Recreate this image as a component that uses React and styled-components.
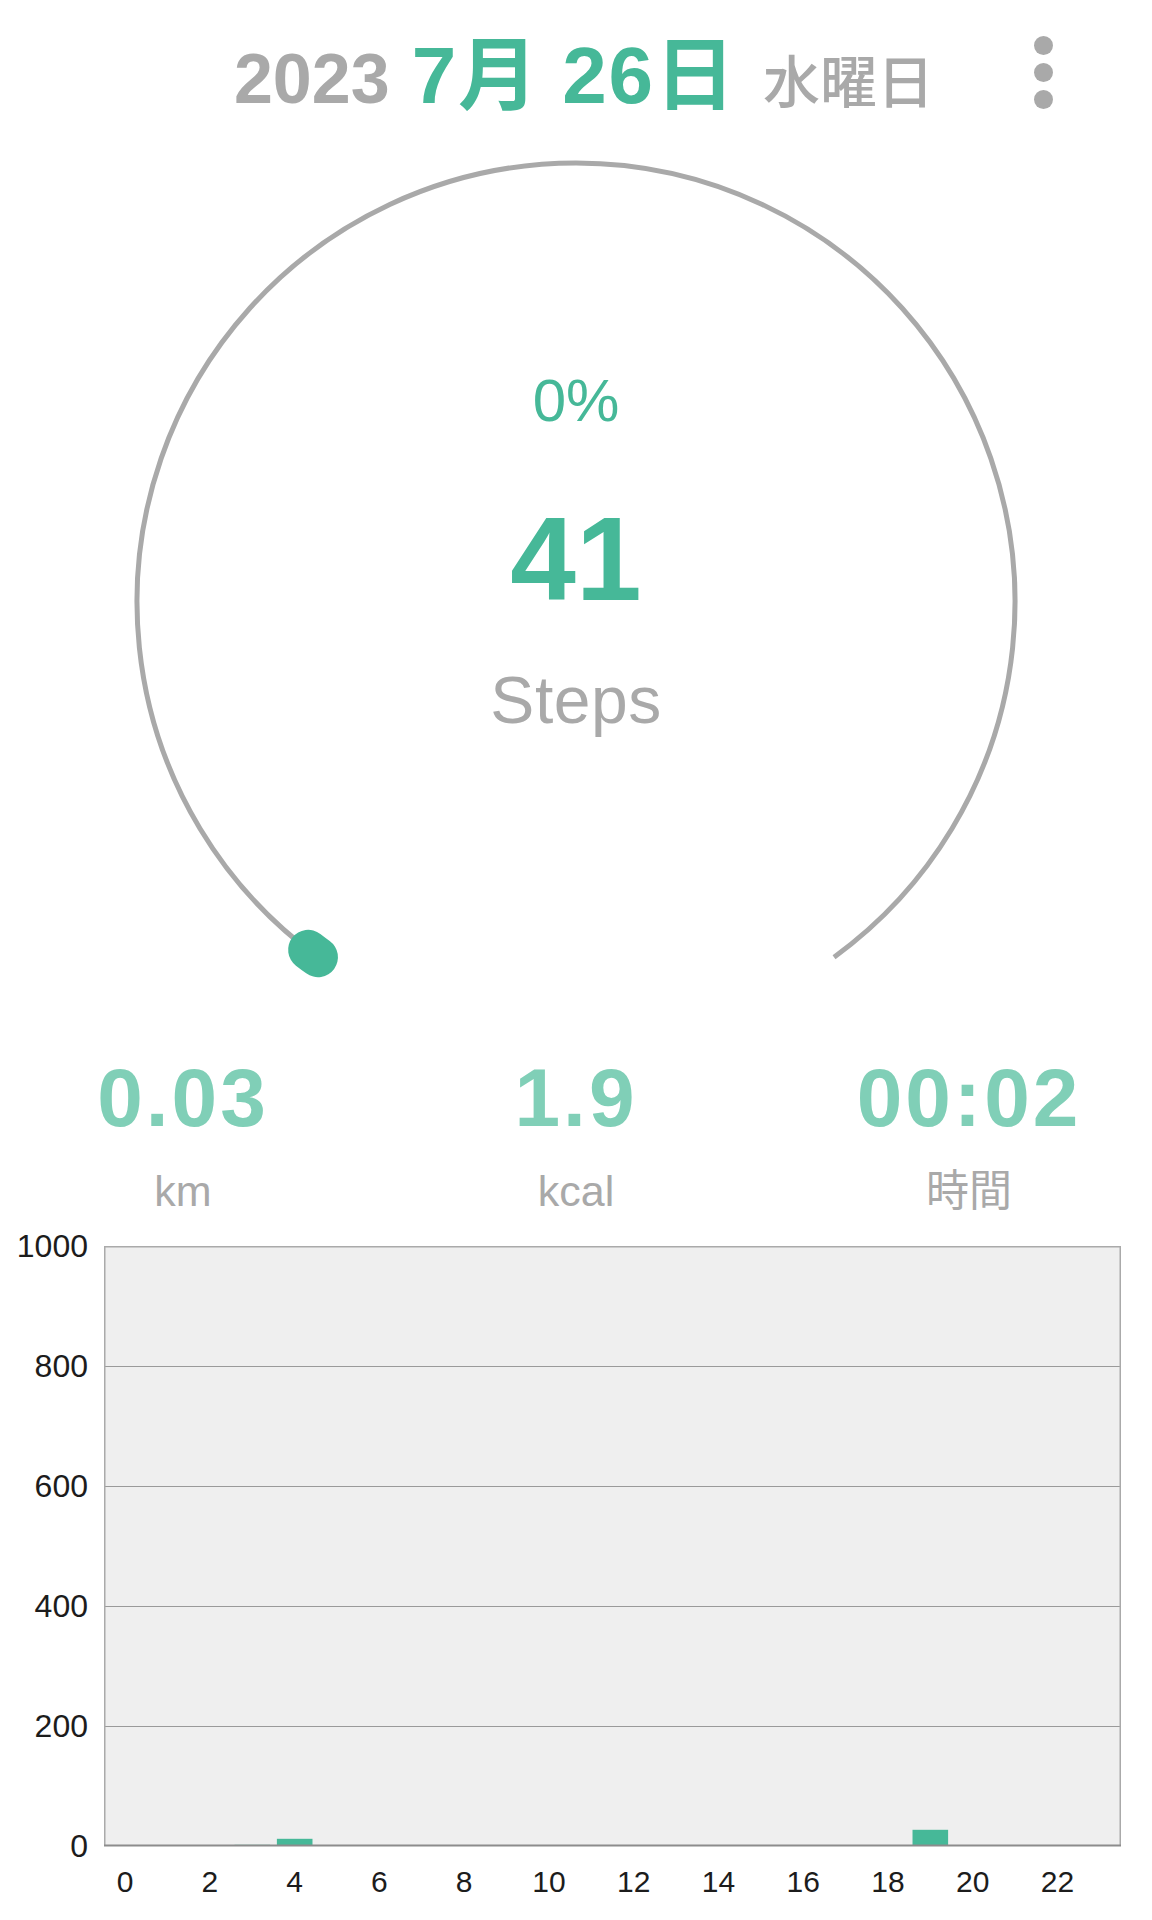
import React from 'react'
import styled, { createGlobalStyle } from 'styled-components'

const colors = {
  green: '#46b898',
  light: '#80cfb7',
  gray: '#a9a9a9',
  ink: '#1c1c1c',
}

const hourly = [0, 0, 0, 2, 12, 0, 0, 0, 0, 0, 0, 0, 0, 0, 0, 0, 0, 0, 0, 27, 0, 0, 0, 0]

const GlobalStyle = createGlobalStyle`
  body {
    margin: 0;
    background: #ffffff;
    overflow: hidden;
    font-family: "Liberation Sans", "Noto Sans CJK JP", sans-serif;
  }
`

const Gauge = () => {
  const cx = 576
  const cy = 472
  const r = 439
  const pt = (deg) => {
    const a = (deg * Math.PI) / 180
    return [cx + r * Math.cos(a), cy + r * Math.sin(a)]
  }
  const [sx, sy] = pt(126)
  const [ex, ey] = pt(54)
  const [kx, ky] = pt(127.6)
  return (
    <GaugeSvg viewBox="0 0 1152 927" width="1152" height="927">
      <path
        d={`M ${sx} ${sy} A ${r} ${r} 0 1 1 ${ex} ${ey}`}
        fill="none"
        stroke={colors.gray}
        strokeWidth="5"
      />
      <path
        d={`M ${sx} ${sy} A ${r} ${r} 0 0 1 ${kx} ${ky}`}
        fill="none"
        stroke={colors.green}
        strokeWidth="40"
        strokeLinecap="round"
      />
    </GaugeSvg>
  )
}

const PlotDrawing = () => {
  const w = 1017
  const h = 600
  const slot = w / 24
  return (
    <svg width={w} height={h + 1} viewBox={`0 0 ${w} ${h + 1}`}>
      <rect x="0" y="0" width={w} height={h} fill="#efefef" />
      {[120, 240, 360, 480].map((y) => (
        <line key={y} x1="0" x2={w} y1={y + 0.5} y2={y + 0.5} stroke="#9a9a9a" strokeWidth="1" />
      ))}
      <line x1="0" x2={w} y1="0.75" y2="0.75" stroke="#aaaaaa" strokeWidth="1.5" />
      <line x1="0.75" x2="0.75" y1="0" y2={h} stroke="#aaaaaa" strokeWidth="1.5" />
      <line x1={w - 0.75} x2={w - 0.75} y1="0" y2={h} stroke="#aaaaaa" strokeWidth="1.5" />
      {hourly.map((v, i) =>
        v > 0 ? (
          <rect
            key={i}
            x={i * slot + slot * 0.08}
            y={h - v * 0.6}
            width={slot * 0.84}
            height={v * 0.6}
            fill={colors.green}
          />
        ) : null
      )}
      <line x1="0" x2={w} y1={h - 0.5} y2={h - 0.5} stroke="#8c8c8c" strokeWidth="2" />
    </svg>
  )
}

const App = () => {
  return (
    <Page>
      <GlobalStyle />
      <Header>
        <span />
        <DateLine>
          <Year>2023</Year>
          <Big>7月</Big>
          <Big>26日</Big>
          <Weekday>水曜日</Weekday>
        </DateLine>
        <Menu aria-label="menu">
          <Dot />
          <Dot />
          <Dot />
        </Menu>
      </Header>

      <GaugeBox>
        <Gauge />
        <Percent>0%</Percent>
        <Count>41</Count>
        <Unit>Steps</Unit>
      </GaugeBox>

      <Stats>
        <Stat>
          <StatValue>0.03</StatValue>
          <StatLabel>km</StatLabel>
        </Stat>
        <Stat>
          <StatValue>1.9</StatValue>
          <StatLabel>kcal</StatLabel>
        </Stat>
        <Stat>
          <StatValue>00:02</StatValue>
          <StatLabel>時間</StatLabel>
        </Stat>
      </Stats>

      <Chart>
        <YAxis>
          {['1000', '800', '600', '400', '200', '0'].map((t) => (
            <YTick key={t}>{t}</YTick>
          ))}
        </YAxis>
        <PlotDrawing />
        <span />
        <XAxis>
          {hourly.map((_, i) => (
            <XTick key={i}>{i % 2 === 0 ? i : ''}</XTick>
          ))}
        </XAxis>
      </Chart>
    </Page>
  )
}

const Page = styled.div`
  width: 1152px;
  min-height: 1920px;
  display: flex;
  flex-direction: column;
  background: #ffffff;
`

const Header = styled.div`
  height: 130px;
  display: grid;
  grid-template-columns: 1fr auto 1fr;
  align-items: start;
`

const DateLine = styled.div`
  display: flex;
  align-items: baseline;
  gap: 22px;
  padding-top: 36px;
  margin-left: 16px;
  font-weight: 700;
  line-height: 1;
`

const Year = styled.span`
  font-size: 70px;
  color: ${colors.gray};
`

const Big = styled.span`
  font-size: 80px;
  color: ${colors.green};
  letter-spacing: 2px;
`

const Weekday = styled.span`
  font-size: 57px;
  font-weight: 500;
  color: ${colors.gray};
  margin-left: 4px;
`

const Menu = styled.div`
  justify-self: end;
  margin: 36px 99px 0 0;
  display: flex;
  flex-direction: column;
  gap: 8px;
  cursor: pointer;
`

const Dot = styled.span`
  width: 19px;
  height: 19px;
  border-radius: 50%;
  background: ${colors.gray};
`

const GaugeBox = styled.div`
  position: relative;
  height: 927px;
  display: flex;
  flex-direction: column;
  align-items: center;
  padding-top: 241px;
  box-sizing: border-box;
  line-height: 1;
`

const GaugeSvg = styled.svg`
  position: absolute;
  top: 0;
  left: 0;
`

const Percent = styled.div`
  position: relative;
  font-size: 60px;
  color: ${colors.green};
`

const Count = styled.div`
  position: relative;
  margin-top: 69px;
  font-size: 118px;
  font-weight: 700;
  color: ${colors.green};
`

const Unit = styled.div`
  position: relative;
  margin-top: 49px;
  font-size: 66px;
  color: ${colors.gray};
  letter-spacing: 0.5px;
`

const Stats = styled.div`
  display: grid;
  grid-template-columns: repeat(3, 393px);
  justify-content: center;
  line-height: 1;
`

const Stat = styled.div`
  display: flex;
  flex-direction: column;
  align-items: center;
`

const StatValue = styled.div`
  font-size: 82px;
  font-weight: 700;
  color: ${colors.light};
  letter-spacing: 3px;
`

const StatLabel = styled.div`
  margin-top: 31px;
  font-size: 43px;
  color: ${colors.gray};
`

const Chart = styled.div`
  margin-top: 33px;
  display: grid;
  grid-template-columns: 104px 1017px;
  grid-template-rows: 601px auto;
`

const YAxis = styled.div`
  display: flex;
  flex-direction: column;
  justify-content: space-between;
  align-items: flex-end;
  padding: 0 16px 1px 0;
`

const YTick = styled.div`
  height: 0;
  line-height: 0;
  font-size: 32px;
  color: ${colors.ink};
`

const XAxis = styled.div`
  display: grid;
  grid-template-columns: repeat(24, 1fr);
  margin-top: 20px;
`

const XTick = styled.div`
  font-size: 30px;
  line-height: 1;
  text-align: center;
  color: ${colors.ink};
  white-space: nowrap;
  overflow: visible;
`

export default App
